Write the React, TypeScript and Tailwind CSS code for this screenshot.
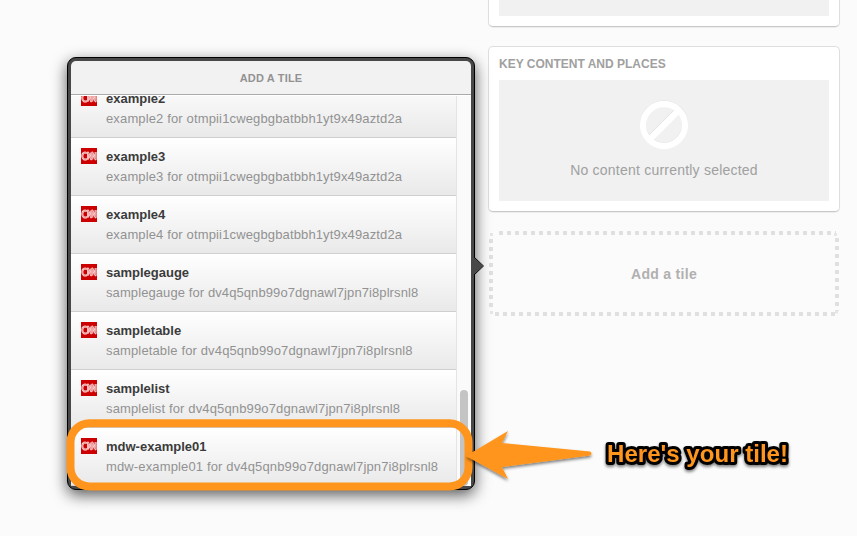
const dv = "dv4q5qnb99o7dgnawl7jpn7i8plrsnl8";
const ot = "otmpii1cwegbgbatbbh1yt9x49aztd2a";

const tiles = [
  { name: "example2", key: ot },
  { name: "example3", key: ot },
  { name: "example4", key: ot },
  { name: "samplegauge", key: dv },
  { name: "sampletable", key: dv },
  { name: "samplelist", key: dv },
  { name: "mdw-example01", key: dv },
];

const logoPath = "M6 5.2C3.400 3.400 1.300 5.200 1.300 8S3.400 12.600 6.100 10.800M7 11.500V4.500L10.200 11.300V4.500M11.300 11.500V4.500L14.600 11.300V4";

function CnnLogo() {
  return (
    <svg width="16" height="16" viewBox="0 0 16 16" className="mt-[10px] shrink-0">
      <rect width="16" height="16" fill="#cc0000" />
      <g fill="none" strokeLinejoin="round">
        <path d={logoPath} stroke="#fbe3e3" strokeWidth="2" />
        <path d={logoPath} stroke="#e05050" strokeWidth=".5" />
      </g>
    </svg>
  );
}

function TileRow({ name, tileKey }: { name: string; tileKey: string }) {
  return (
    <li className="flex h-[58px] shrink-0 gap-[9px] border-b border-[#cfcfcf] bg-linear-to-b from-white to-[#e9e9e9] pl-[10px]">
      <CnnLogo />
      <div className="pt-[9px] whitespace-nowrap">
        <div className="text-[13px] leading-[20px] font-bold text-[#3b3b3b]">{name}</div>
        <div className={`text-[13px] leading-[20px] text-[#929292] ${name === "samplegauge" ? "tracking-[0.09px]" : "tracking-[0.14px]"}`}>
          {name} for {tileKey}
        </div>
      </div>
    </li>
  );
}

function Popover() {
  return (
    <section className="absolute top-[57px] left-[67px] flex h-[433px] w-[408px] flex-col rounded-[9px] border border-black bg-[#484848] p-[3px] shadow-[0_5px_15px_rgba(0,0,0,0.65)]">
      <header className="h-[34px] shrink-0 rounded-t-[5px] border-b border-[#aaaaaa] bg-[#f2f2f2] text-center text-[11px] leading-[34px] font-bold tracking-[0.18px] text-[#929292]">
        ADD A TILE
      </header>
      <div className="flex min-h-0 flex-1 overflow-hidden bg-white pt-px">
        <ul className="flex w-[385px] flex-col overflow-hidden">
          <li className="-mt-[16px] h-0 shrink-0" />
          {tiles.map((t) => (
            <TileRow key={t.name} name={t.name} tileKey={t.key} />
          ))}
        </ul>
        <div className="flex w-[15px] items-end border-l border-[#e4e4e4] bg-[#fafafa] pl-[3px]">
          <div className="h-[96px] w-[8px] rounded-full bg-[#c4c4c4]" />
        </div>
      </div>
      <svg className="absolute top-[198px] left-[403px]" width="14" height="21" viewBox="0 0 14 21">
        <path d="M0 0H3V1.5L12 10 3 18.5V21H0Z" fill="#484848" />
        <path d="M3.5 0V1.5L12.5 10 3.5 18.5V21" fill="none" stroke="#000" />
      </svg>
    </section>
  );
}

function Annotation() {
  return (
    <svg className="pointer-events-none absolute top-0 left-0" width="857" height="536" viewBox="0 0 857 536">
      <defs>
        <filter id="drop" x="-10%" y="-20%" width="120%" height="150%">
          <feDropShadow dx="0" dy="2" stdDeviation="1.5" floodColor="#000" floodOpacity=".5" />
        </filter>
      </defs>
      <rect x="70.5" y="423.3" width="398" height="63.2" rx="19" fill="none" stroke="#ff951c" strokeWidth="8" />
      <path d="M466 456 508 431 502 443 590 451.5Q593 453.5 590 455.5L502 467 508 479Z" fill="#ff951c" filter="url(#drop)" />
      <text
        x="607"
        y="462"
        textLength="181"
        lengthAdjust="spacingAndGlyphs"
        fontSize="24"
        fontWeight="bold"
        fill="#ff951c"
        stroke="#000"
        strokeWidth="6"
        strokeLinejoin="round"
        paintOrder="stroke"
        filter="url(#drop)"
      >
        Here's your tile!
      </text>
    </svg>
  );
}

export default function App() {
  return (
    <div className="relative h-[536px] w-[857px] overflow-hidden bg-[#fbfbfb] font-['Liberation_Sans',Arial,sans-serif]">
      <main className="ml-[488px] flex w-[352px] flex-col">
        <div className="h-[27px] rounded-b-[5px] border border-t-0 border-[#dedede] border-b-[#c8c8c8] bg-white px-[10px] shadow-[0_1px_1px_rgba(0,0,0,0.06)]">
          <div className="h-[16px] bg-[#f1f1f1]" />
        </div>
        <div className="mt-[19px] h-[166px] rounded-[5px] border border-[#dedede] border-b-[#c8c8c8] bg-white px-[10px] shadow-[0_1px_1px_rgba(0,0,0,0.06)]">
          <h2 className="h-[33px] pt-px text-[12px] leading-[33px] font-bold text-[#a0a0a0]">KEY CONTENT AND PLACES</h2>
          <div className="flex h-[121px] flex-col items-center bg-[#f1f1f1] pt-[20px]">
            <svg width="50" height="50" viewBox="0 0 50 50">
              <g fill="none" strokeWidth="6.3">
                <g stroke="#e2e2e2">
                  <circle cx="25" cy="24.3" r="21" />
                  <path d="M10 39 40 9" />
                </g>
                <g stroke="#fff">
                  <circle cx="25" cy="25" r="21" />
                  <path d="M10 40 40 10" />
                </g>
              </g>
            </svg>
            <p className="mt-[10px] text-[14px] leading-[20px] tracking-[0.22px] text-[#a0a0a0]">No content currently selected</p>
          </div>
        </div>
        <div className="relative mt-[19px] ml-px flex h-[85px] w-[350px] items-center justify-center pt-[2px] text-[14px] font-bold tracking-[0.3px] text-[#b0b0b0]">
          <svg className="absolute inset-0" width="350" height="85" viewBox="0 0 350 85">
            <g stroke="#e0e0e0" strokeWidth="4" strokeDasharray="4 4" fill="none">
              <path d="M10 2H347M2 8V80M6 83H347M348 7V80" />
              <path d="M1 3.5H4M1 81.5H4M345 3.5H348M346 81H349" strokeWidth="3" strokeDasharray="none" stroke="#e6e6e6" />
            </g>
          </svg>
          Add a tile
        </div>
      </main>
      <Popover />
      <Annotation />
    </div>
  );
}
